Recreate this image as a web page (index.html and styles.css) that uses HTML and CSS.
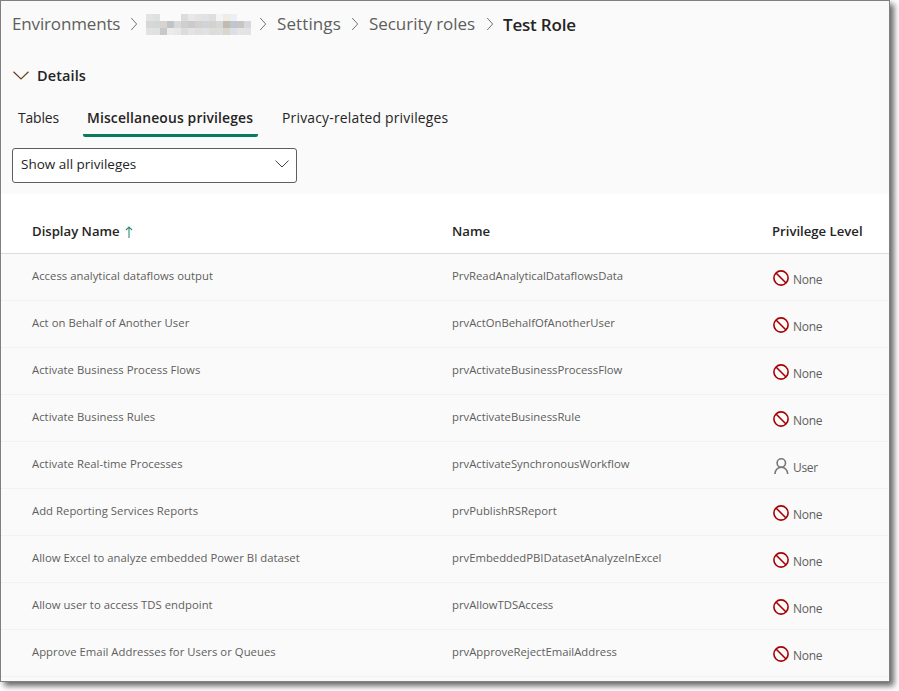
FILE: index.html
```html
<!DOCTYPE html>
<html lang="en">
<head>
  <meta charset="UTF-8">
  <title>Test Role - Security roles</title>
  <link rel="stylesheet" href="styles.css">
</head>
<body>

<svg width="0" height="0" class="icon-defs">
  <symbol id="icon-none" viewBox="0 0 16 16">
    <circle cx="8" cy="8" r="7.1" fill="none" stroke="#a80000" stroke-width="1.6"/>
    <path d="M3 3l10 10" stroke="#a80000" stroke-width="1.6"/>
  </symbol>
  <symbol id="icon-user" viewBox="0 0 16 16">
    <circle cx="8.300" cy="5" r="4.2" fill="none" stroke="#797775" stroke-width="1.6"/>
    <path d="M1.900 16c0-3.900 2.700-6.700 6.400-6.700s6.400 2.800 6.400 6.700" fill="none" stroke="#797775" stroke-width="1.6"/>
  </symbol>
  <symbol id="icon-sep" viewBox="0 0 8 14">
    <path d="M1.200 1l5.500 6-5.500 6" fill="none" stroke="#767472" stroke-width="1"/>
  </symbol>
</svg>

<div class="window">
  <nav class="breadcrumb">
    <span class="crumb crumb-env">Environments</span>
    <svg class="sep"><use href="#icon-sep"/></svg>
    <svg class="redacted" id="redacted" viewBox="0 0 15 3"></svg>
    <svg class="sep"><use href="#icon-sep"/></svg>
    <span class="crumb crumb-settings">Settings</span>
    <svg class="sep"><use href="#icon-sep"/></svg>
    <span class="crumb crumb-roles">Security roles</span>
    <svg class="sep"><use href="#icon-sep"/></svg>
    <span class="crumb current">Test Role</span>
  </nav>

  <div class="details">
    <svg class="details-chevron" viewBox="0 0 16 9"><path d="M.5.8L8 8 15.500.8" fill="none" stroke="#6b3f1c" stroke-width="1.200"/></svg>
    <span>Details</span>
  </div>

  <div class="tabs">
    <div class="tab tab-tables">Tables</div>
    <div class="tab active">Miscellaneous privileges</div>
    <div class="tab tab-privacy">Privacy-related privileges</div>
  </div>

  <div class="dropdown">
    <span>Show all privileges</span>
    <svg class="dropdown-chevron" viewBox="0 0 14 8"><path d="M.5.600L7 7 13.500.6" fill="none" stroke="#444" stroke-width="1"/></svg>
  </div>

  <div class="grid">
    <div class="row header">
      <div class="cell name">Display Name <svg class="sort" viewBox="0 0 8 12"><path d="M4 12V1M1 4l3-3 3 3" fill="none" stroke="#2c8f78" stroke-width="1.100"/></svg></div>
      <div class="cell">Name</div>
      <div class="cell">Privilege Level</div>
    </div>
    <div id="rows"></div>
  </div>
</div>

<script>
  const privileges = [
    ["Access analytical dataflows output", "PrvReadAnalyticalDataflowsData", "None"],
    ["Act on Behalf of Another User", "prvActOnBehalfOfAnotherUser", "None"],
    ["Activate Business Process Flows", "prvActivateBusinessProcessFlow", "None"],
    ["Activate Business Rules", "prvActivateBusinessRule", "None"],
    ["Activate Real-time Processes", "prvActivateSynchronousWorkflow", "User"],
    ["Add Reporting Services Reports", "prvPublishRSReport", "None"],
    ["Allow Excel to analyze embedded Power BI dataset", "prvEmbeddedPBIDatasetAnalyzeInExcel", "None"],
    ["Allow user to access TDS endpoint", "prvAllowTDSAccess", "None"],
    ["Approve Email Addresses for Users or Queues", "prvApproveRejectEmailAddress", "None"]
  ];

  document.getElementById("rows").innerHTML = privileges.map(([label, name, level]) => `
    <div class="row">
      <div class="cell label">${label}</div>
      <div class="cell">${name}</div>
      <div class="cell level"><svg class="level-icon"><use href="#icon-${level.toLowerCase()}"/></svg><span>${level}</span></div>
    </div>`).join("");

  // pixelated environment name
  const mosaic = [
    "e3e3e3 dfe0e0 fafafa fafafa fafafa dcdcdc e8e8e8 e5e4e2 dfe3e8 dedede f3f4f5 efece6 ebf0f7 fafafa fafafa",
    "d7d7d7 d5d6d6 d7d4ce c1c3c6 d8d9da cfcfcf cbcbcb d2d1cf d0d4d8 d3d2cf d7d7d7 c1bbb2 bfc6d0 c8c6c4 d5d9dd",
    "e2e2e1 dfe1e3 c8c8c8 ebebeb e8e8e8 dcdcdc e3e3e2 dfdfdf e1e1e1 dcdcdc dddddc d8d6cf dae0e6 e5e4e3 e3e3e3"
  ];
  document.getElementById("redacted").innerHTML = mosaic.map((line, y) =>
    line.split(" ").map((c, x) => `<rect x="${x}" y="${y}" width="1" height="1" fill="#${c}"/>`).join("")
  ).join("");
</script>

</body>
</html>
```
FILE: styles.css
```css
body {
  margin: 0;
  height: 691px;
  overflow: hidden;
  background: #fff;
  font-family: "Open Sans", "Noto Sans", sans-serif;
  color: #242424;
}

.icon-defs {
  display: block;
}

.window {
  box-sizing: border-box;
  width: 890px;
  height: 682px;
  overflow: hidden;
  background: #fafafa;
  border: 1px solid #808080;
  box-shadow: 4px 4px 6px rgba(0, 0, 0, 0.6);
}

.breadcrumb {
  display: flex;
  align-items: center;
  height: 46px;
  padding-left: 11px;
  font-size: 17px;
  line-height: 24px;
  color: #605e5c;
  white-space: nowrap;
}

.sep {
  flex: none;
  width: 8px;
  height: 14px;
  margin-right: 8px;
}

.crumb {
  box-sizing: border-box;
}

.crumb-env {
  width: 118px;
  letter-spacing: -0.15px;
}

.crumb-settings {
  width: 76px;
  padding-left: 2px;
  letter-spacing: 0.1px;
}

.crumb-roles {
  width: 119px;
  padding-left: 2px;
  letter-spacing: -0.05px;
}

.redacted {
  width: 105px;
  height: 21px;
  margin-right: 8px;
  shape-rendering: crispEdges;
}

.current {
  padding: 2px 0 0 1px;
  font-weight: 600;
  letter-spacing: -0.2px;
  color: #242424;
}

.details {
  display: flex;
  align-items: center;
  gap: 8px;
  height: 56px;
  padding-left: 12px;
  font-size: 14.500px;
  font-weight: 600;
}

.details span {
  letter-spacing: 0.1px;
}

.details-chevron {
  width: 16px;
  height: 9px;
}

.tabs {
  display: flex;
  height: 34px;
  padding-left: 13px;
  font-size: 13.900px;
  line-height: 29px;
  white-space: nowrap;
}

.tab {
  box-sizing: border-box;
  padding: 0 4px;
}

.tab-tables {
  width: 69px;
  letter-spacing: -0.15px;
}

.active {
  width: 175px;
  font-weight: 600;
  letter-spacing: 0.14px;
  background: linear-gradient(#0a7b60, #0a7b60) bottom / 100% 3px no-repeat;
  border-radius: 2px;
}

.tab-privacy {
  margin-left: 20px;
  letter-spacing: 0.2px;
}

.dropdown {
  box-sizing: border-box;
  display: flex;
  align-items: center;
  justify-content: space-between;
  width: 285px;
  height: 35px;
  margin: 11px 0 11px 11px;
  padding: 0 7px 3px 8px;
  background: #fff;
  border: 1px solid #605e5c;
  border-radius: 3px;
  font-size: 13.500px;
}

.dropdown-chevron {
  width: 14px;
  height: 8px;
}

.row {
  box-sizing: border-box;
  display: grid;
  grid-template-columns: 420px 320px 1fr;
  align-items: center;
  height: 47px;
  padding: 0 0 3px 31px;
  border-bottom: 1px solid #f3f2f1;
  font-size: 11.300px;
  color: #605e5c;
  white-space: nowrap;
}

.label {
  letter-spacing: 0.03px;
}

.header {
  height: 60px;
  padding: 15px 0 0 31px;
  background: #fff;
  border-bottom-color: #dcdcdc;
  font-size: 13.150px;
  font-weight: 600;
  color: #242424;
}

.sort {
  width: 8px;
  height: 12px;
  margin-left: 2px;
  vertical-align: -2px;
}

.level {
  display: flex;
  align-items: center;
  gap: 4px;
  padding: 4px 0 0 1px;
  font-size: 12px;
  letter-spacing: -0.3px;
}

.level-icon {
  width: 16px;
  height: 16px;
}

.level span {
  padding-top: 4px;
}
```
